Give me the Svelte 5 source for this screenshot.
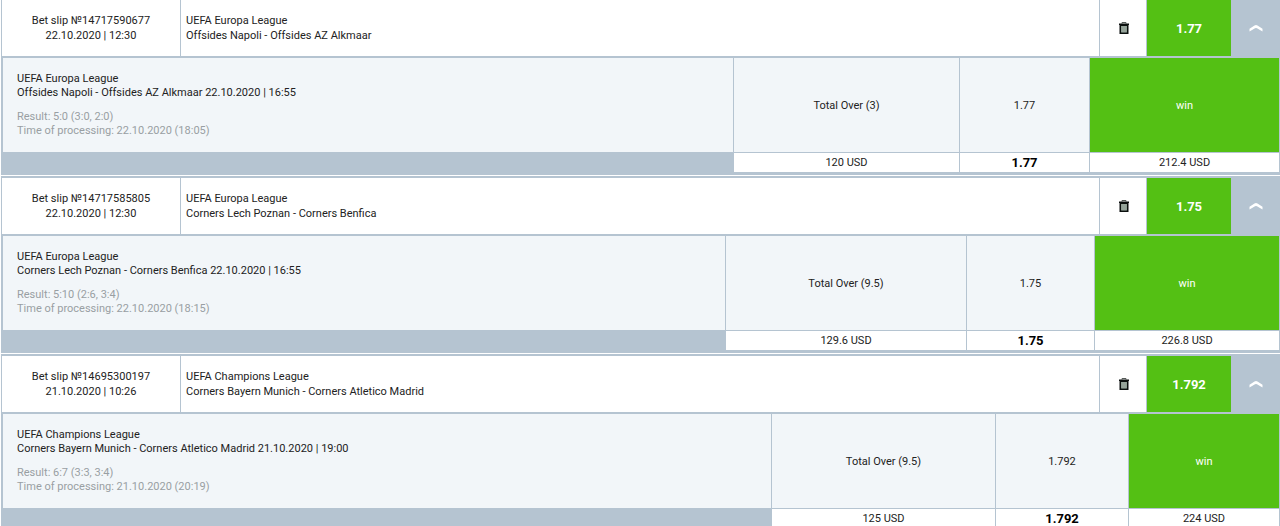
<script lang="ts">
	type Slip = {
		number: string;
		placed: string;
		league: string;
		match: string;
		starts: string;
		result: string;
		processed: string;
		bet: string;
		odds: string;
		stake: string;
		payout: string;
		columns: number[];
	};

	const slips: Slip[] = [
		{
			number: '14717590677',
			placed: '22.10.2020 | 12:30',
			league: 'UEFA Europa League',
			match: 'Offsides Napoli - Offsides AZ Alkmaar',
			starts: '22.10.2020 | 16:55',
			result: '5:0 (3:0, 2:0)',
			processed: '22.10.2020 (18:05)',
			bet: 'Total Over (3)',
			odds: '1.77',
			stake: '120 USD',
			payout: '212.4 USD',
			columns: [730, 225, 129, 189]
		},
		{
			number: '14717585805',
			placed: '22.10.2020 | 12:30',
			league: 'UEFA Europa League',
			match: 'Corners Lech Poznan - Corners Benfica',
			starts: '22.10.2020 | 16:55',
			result: '5:10 (2:6, 3:4)',
			processed: '22.10.2020 (18:15)',
			bet: 'Total Over (9.5)',
			odds: '1.75',
			stake: '129.6 USD',
			payout: '226.8 USD',
			columns: [722, 240, 127, 184]
		},
		{
			number: '14695300197',
			placed: '21.10.2020 | 10:26',
			league: 'UEFA Champions League',
			match: 'Corners Bayern Munich - Corners Atletico Madrid',
			starts: '21.10.2020 | 19:00',
			result: '6:7 (3:3, 3:4)',
			processed: '21.10.2020 (20:19)',
			bet: 'Total Over (9.5)',
			odds: '1.792',
			stake: '125 USD',
			payout: '224 USD',
			columns: [768, 223, 132, 150]
		}
	];

	// column weights to percentages
	function widths(columns: number[]): number[] {
		const total = columns.reduce((sum, c) => sum + c, 0);
		return columns.map((c) => (c / total) * 100);
	}
</script>

<main class="history">
	{#each slips as slip (slip.number)}
		<section class="slip">
			<header class="slip-header">
				<div class="slip-id">
					<span>Bet slip №{slip.number}</span>
					<span>{slip.placed}</span>
				</div>
				<div class="slip-event">
					<span>{slip.league}</span>
					<span>{slip.match}</span>
				</div>
				<button class="slip-delete" type="button" aria-label="Delete bet slip">
					<svg width="10" height="12" viewBox="0 0 10 12" aria-hidden="true">
						<path d="M3 1.5V.5h4v1" fill="none" stroke="#555b58" />
						<path d="M0 1.5h10v1.5H9.5V12H.5V3H0z" fill="#0b0f0e" />
						<path d="M2 4h6v6.5H2z" fill="#8d9c92" />
						<path d="M4 4v6.5M6 4v6.5" stroke="#a9b6ab" stroke-width=".6" />
					</svg>
				</button>
				<div class="slip-odds">{slip.odds}</div>
				<button class="slip-toggle" type="button" aria-label="Collapse bet slip">
					<svg width="14" height="8" viewBox="0 0 14 8" aria-hidden="true">
						<path d="M.5 4.8 5.5 1.5Q7 .5 8.5 1.5L13.5 4.8V7.5L8 4.3Q7 3.7 6 4.3L.5 7.5z" fill="#fff" />
					</svg>
				</button>
			</header>

			<table class="slip-table">
				<colgroup>
					{#each widths(slip.columns) as width}
						<col style="width: {width}%" />
					{/each}
				</colgroup>
				<tbody>
					<tr class="row-bet">
						<td class="bet-event">
							<p>{slip.league}<br />{slip.match} {slip.starts}</p>
							<p class="bet-result">
								Result: {slip.result}<br />Time of processing: {slip.processed}
							</p>
						</td>
						<td>{slip.bet}</td>
						<td>{slip.odds}</td>
						<td class="bet-win">win</td>
					</tr>
					<tr class="row-total">
						<td class="total-empty"></td>
						<td>{slip.stake}</td>
						<td class="total-odds">{slip.odds}</td>
						<td>{slip.payout}</td>
					</tr>
				</tbody>
			</table>
		</section>
	{/each}
</main>

<style>
	:global(body) {
		margin: 0;
		background: #fff;
	}

	.history {
		--line: #b5c4d1;
		--win: #54c014;
		padding-left: 1px;
		font-family: Roboto, "Liberation Sans", sans-serif;
		font-size: 11px;
		line-height: 15px;
		color: #222;
	}

	.slip {
		border-left: 1px solid var(--line);
		border-bottom: 2px solid var(--line);
	}

	.slip + .slip {
		margin-top: 1px;
		border-top: 2px solid var(--line);
	}

	.slip-header {
		display: grid;
		grid-template-columns: 178px 1fr 46px 84px 48px;
		column-gap: 1px;
		height: 56px;
		border-bottom: 1px solid var(--line);
		background: var(--line);
	}

	.slip-id,
	.slip-event {
		display: flex;
		flex-direction: column;
		justify-content: center;
		background: #fff;
	}

	.slip-id {
		align-items: center;
	}

	.slip-event {
		padding-left: 5px;
	}

	.slip-delete,
	.slip-toggle {
		display: flex;
		align-items: center;
		justify-content: center;
		padding: 0;
		border: 0;
		cursor: pointer;
	}

	.slip-delete {
		padding-left: 2px;
		background: #fff;
	}

	.slip-toggle {
		background: var(--line);
	}

	.slip-odds {
		display: flex;
		align-items: center;
		justify-content: center;
		background: var(--win);
		color: #fff;
		font-size: 13px;
		font-weight: 700;
	}

	.slip-table {
		width: 100%;
		table-layout: fixed;
		border-collapse: separate;
		border-spacing: 1px;
		background: var(--line);
	}

	td {
		padding: 0;
		text-align: center;
		vertical-align: middle;
	}

	.row-bet td {
		background: #f2f6f9;
	}

	.row-bet .bet-event {
		padding: 14px;
		line-height: 14px;
		text-align: left;
	}

	.bet-event p {
		margin: 0;
	}

	.bet-event .bet-result {
		margin-top: 10px;
		color: #999fa3;
	}

	.row-bet .bet-win {
		background: var(--win);
		color: #fff;
	}

	.row-total td {
		height: 19px;
		background: #fff;
	}

	.row-total .total-empty {
		background: var(--line);
	}

	.row-total .total-odds {
		color: #000;
		font-size: 13px;
		font-weight: 700;
	}
</style>
